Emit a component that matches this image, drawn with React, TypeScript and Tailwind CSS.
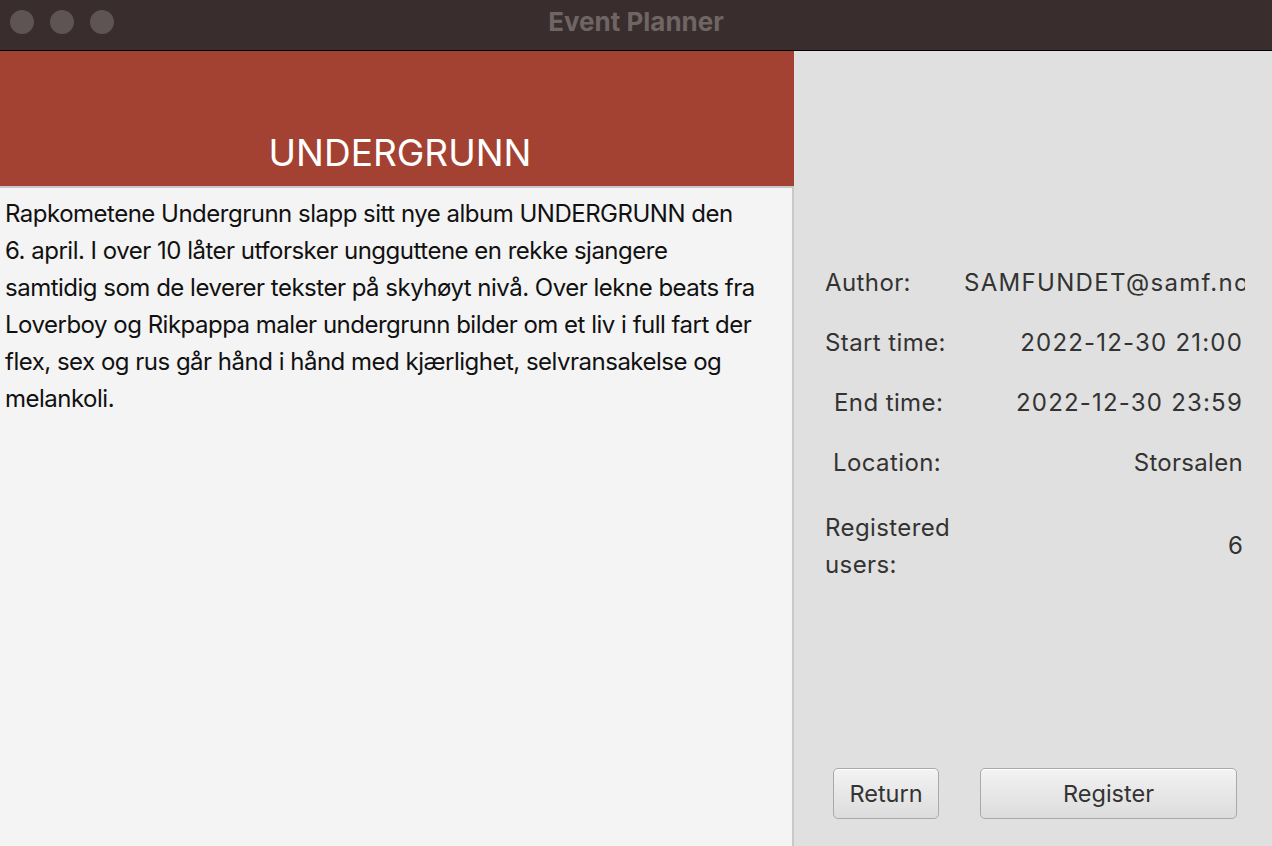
const rows: { label: string; value: string; indent: string; valueClass: string }[] = [
  { label: 'Start time:', value: '2022-12-30 21:00', indent: 'pl-0', valueClass: 'tracking-[1.2px]' },
  { label: 'End time:', value: '2022-12-30 23:59', indent: 'pl-[9px]', valueClass: 'tracking-[1.2px]' },
  { label: 'Location:', value: 'Storsalen', indent: 'pl-[8px]', valueClass: 'tracking-[0.3px]' },
]

// wrapped the same way as the original text area
const descriptionLines = [
  'Rapkometene Undergrunn slapp sitt nye album UNDERGRUNN den',
  '6. april. I over 10 låter utforsker ungguttene en rekke sjangere',
  'samtidig som de leverer tekster på skyhøyt nivå. Over lekne beats fra',
  'Loverboy og Rikpappa maler undergrunn bilder om et liv i full fart der',
  'flex, sex og rus går hånd i hånd med kjærlighet, selvransakelse og',
  'melankoli.',
]

function Button({ children, className }: { children: string; className: string }) {
  return (
    <button
      className={`h-[51px] rounded-[5px] border border-[#a9a9a9] bg-gradient-to-b from-[#f3f3f3] to-[#dcdcdc] text-[23.5px] text-[#333] shadow-[inset_0_1px_0_#fff] ${className}`}
    >
      {children}
    </button>
  )
}

export default function App() {
  return (
    <div className="w-[1272px] h-[846px] flex flex-col overflow-hidden font-['Inter',_'Noto_Sans',_sans-serif]">
      {/* title bar */}
      <div className="h-[51px] shrink-0 bg-[#392d2d] border-b border-black flex items-center relative">
        <div className="flex gap-4 pl-[10px] pb-[7px]">
          <span className="w-6 h-6 rounded-full bg-[#5e5454]" />
          <span className="w-6 h-6 rounded-full bg-[#5e5454]" />
          <span className="w-6 h-6 rounded-full bg-[#5e5454]" />
        </div>
        <div className="absolute inset-0 flex items-center justify-center pb-[8px] text-[26px] font-bold text-[#6f6565]">
          Event Planner
        </div>
      </div>

      <div className="flex flex-1 min-h-0">
        {/* left */}
        <div className="w-[794px] shrink-0 flex flex-col">
          <div className="h-[135px] shrink-0 bg-[#a34232] flex items-end justify-center pb-[10px]">
            <h1 className="text-[37px] leading-none text-white pb-[5px] pl-[6px]">UNDERGRUNN</h1>
          </div>
          <div className="flex-1 bg-[#f4f4f4] border-t-2 border-r-2 border-[#c8c8c8] pl-[5px] pt-[7px] overflow-hidden">
            {descriptionLines.map((line) => (
              <p key={line} className="text-[24px] leading-[37px] text-[#111] tracking-[-0.5px] whitespace-nowrap">
                {line}
              </p>
            ))}
          </div>
        </div>

        {/* right */}
        <div className="flex-1 min-w-0 bg-[#e0e0e0] flex flex-col pl-[31px] pr-[27px] pt-[202px] pb-[27px] text-[24px] tracking-[0.4px] text-[#333]">
          <div className="h-[60px] flex items-center">
            <span className="w-[139px] shrink-0">Author:</span>
            <span className="flex-1 min-w-0 whitespace-nowrap overflow-hidden tracking-[1.3px]">SAMFUNDET@samf.no</span>
          </div>
          {rows.map((r) => (
            <div key={r.label} className="h-[60px] flex items-center justify-between pr-[2px]">
              <span className={r.indent}>{r.label}</span>
              <span className={r.valueClass}>{r.value}</span>
            </div>
          ))}
          <div className="mt-[16px] h-[74px] flex items-center justify-between pr-[2px]">
            <span className="leading-[37px] w-[139px]">
              Registered
              <br />
              users:
            </span>
            <span className="tracking-normal">6</span>
          </div>
          <div className="mt-auto flex gap-[41px] pl-[8px] tracking-normal">
            <Button className="w-[106px]">Return</Button>
            <Button className="w-[257px]">Register</Button>
          </div>
        </div>
      </div>
    </div>
  )
}
